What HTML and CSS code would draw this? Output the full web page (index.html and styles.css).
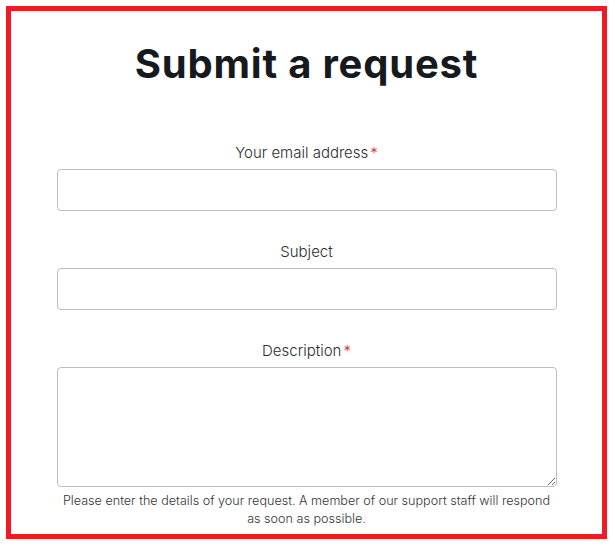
FILE: index.html
```html
<!DOCTYPE html>
<html lang="en">
<head>
<meta charset="utf-8">
<title>Submit a request</title>
<link rel="stylesheet" href="styles.css">
</head>
<body>
<div class="frame">
  <h1 class="title">Submit a request</h1>
  <form class="form">
    <div class="field">
      <label class="label" for="email">Your email address<span class="req">*</span></label>
      <input class="input" id="email" type="email">
    </div>
    <div class="field">
      <label class="label" for="subject">Subject</label>
      <input class="input" id="subject" type="text">
    </div>
    <div class="field">
      <label class="label" for="desc">Description<span class="req">*</span></label>
      <textarea class="textarea" id="desc"></textarea>
      <p class="hint">Please enter the details of your request. A member of our support staff will respond as soon as possible.</p>
    </div>
  </form>
</div>
</body>
</html>
```

FILE: styles.css
```css
html, body {
  margin: 0;
  padding: 0;
  background: #ffffff;
}
body {
  font-family: "Inter", "Liberation Sans", sans-serif;
  color: #2f3033;
}
.frame {
  box-sizing: border-box;
  width: 601px;
  height: 533px;
  margin: 6px 0 0 6px;
  border: 5px solid #ed1c24;
  overflow: hidden;
}
.title {
  margin: 29px 0 0;
  font-size: 40px;
  line-height: 48px;
  font-weight: 700;
  text-align: center;
  color: #16191d;
  letter-spacing: 0.8px;
}
.form {
  width: 500px;
  margin: 55px auto 0;
  display: flex;
  flex-direction: column;
  gap: 31px;
}
.field {
  display: flex;
  flex-direction: column;
  align-items: stretch;
}
.label {
  font-size: 15px;
  line-height: 20px;
  font-weight: 300;
  text-align: center;
  margin-bottom: 6px;
  color: #2b2c2f;
}
.req {
  color: #e8212a;
  margin-left: 2px;
}
.input, .textarea {
  box-sizing: border-box;
  width: 500px;
  margin: 0;
  border: 1px solid #bdbdbd;
  border-radius: 4px;
  background: #fff;
  font: inherit;
}
.input {
  height: 42px;
}
.textarea {
  height: 120px;
  resize: vertical;
  display: block;
}
.hint {
  margin: 5px 0 0;
  font-size: 12.6px;
  line-height: 18px;
  font-weight: 300;
  text-align: center;
  color: #333438;
}
```
